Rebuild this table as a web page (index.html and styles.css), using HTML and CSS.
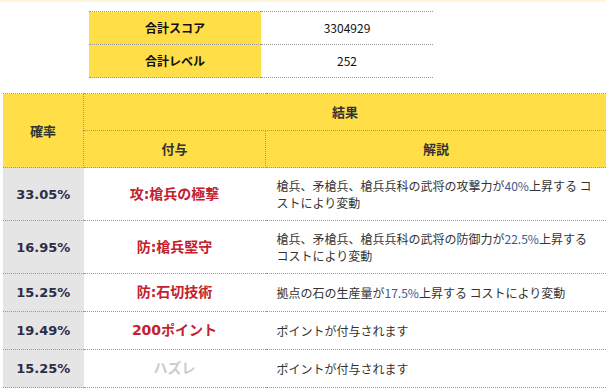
FILE: index.html
```html
<!DOCTYPE html>
<html lang="ja">
<head>
    <meta charset="utf-8">
    <title>ガチャ結果</title>
    <link rel="stylesheet" href="styles.css">
</head>
<body>
    <div class="page">
        <table class="summary">
            <tr>
                <th>合計スコア</th>
                <td>3304929</td>
            </tr>
            <tr>
                <th>合計レベル</th>
                <td>252</td>
            </tr>
        </table>

        <table class="result">
            <tr>
                <th class="col-rate" rowspan="2">確率</th>
                <th colspan="2">結果</th>
            </tr>
            <tr>
                <th class="col-item">付与</th>
                <th class="col-desc">解説</th>
            </tr>
            <tr>
                <td class="rate">33.05%</td>
                <td class="item">攻:槍兵の極撃</td>
                <td class="desc">槍兵、矛槍兵、槍兵兵科の武将の攻撃力が<span class="num">40%</span>上昇する コストにより変動</td>
            </tr>
            <tr>
                <td class="rate">16.95%</td>
                <td class="item">防:槍兵堅守</td>
                <td class="desc">槍兵、矛槍兵、槍兵兵科の武将の防御力が<span class="num">22.5%</span>上昇する<br>コストにより変動</td>
            </tr>
            <tr>
                <td class="rate">15.25%</td>
                <td class="item">防:石切技術</td>
                <td class="desc">拠点の石の生産量が<span class="num">17.5%</span>上昇する コストにより変動</td>
            </tr>
            <tr>
                <td class="rate">19.49%</td>
                <td class="item">200ポイント</td>
                <td class="desc">ポイントが付与されます</td>
            </tr>
            <tr>
                <td class="rate">15.25%</td>
                <td class="item miss">ハズレ</td>
                <td class="desc">ポイントが付与されます</td>
            </tr>
        </table>
    </div>
</body>
</html>
```

FILE: styles.css
```css
body {
    margin: 0;
    font-family: "Noto Sans CJK JP", sans-serif;
    font-size: 12px;
    color: #333;
    background: #fff;
    overflow: hidden;
}
.page {
    border-top: 2px solid #fff5d8;
}
table {
    border-collapse: collapse;
}
th, td {
    border-top: 1px dotted #999;
    border-bottom: 1px dotted #999;
    text-align: center;
    vertical-align: middle;
}
th {
    background-color: #ffde47;
    font-weight: bold;
}

/* 合計 */
.summary {
    margin: 9px 0 0 89px;
    width: 344px;
}
.summary th, .summary td {
    padding: 8px 0;
    line-height: 16px;
    color: #111;
}
.summary th {
    width: 172px;
}

/* 結果一覧 */
.result {
    margin: 15px 0 0 3px;
    width: 603px;
}
.result th {
    padding: 10px 0;
    line-height: 16px;
    font-size: 13px;
}
.result .col-rate {
    width: 80px;
    border-right: 1px dotted #999;
}
.result .col-item {
    width: 181px;
    border-right: 1px dotted #999;
}
.result td {
    padding: 10px 0;
    line-height: 17px;
}
.rate {
    background-color: #e5e5e5;
    font-family: "DejaVu Sans", sans-serif;
    font-weight: bold;
    font-size: 13px;
    color: #2d2d45;
}
.item {
    font-family: "DejaVu Sans", "Noto Sans CJK JP", sans-serif;
    font-weight: bold;
    font-size: 14px;
    color: #c4202e;
}
.item.miss {
    color: #ccc;
}
.result td.desc {
    text-align: left;
    padding: 9px 8px 9px 11px;
}
.num {
    color: #3d5a8f;
}
```
